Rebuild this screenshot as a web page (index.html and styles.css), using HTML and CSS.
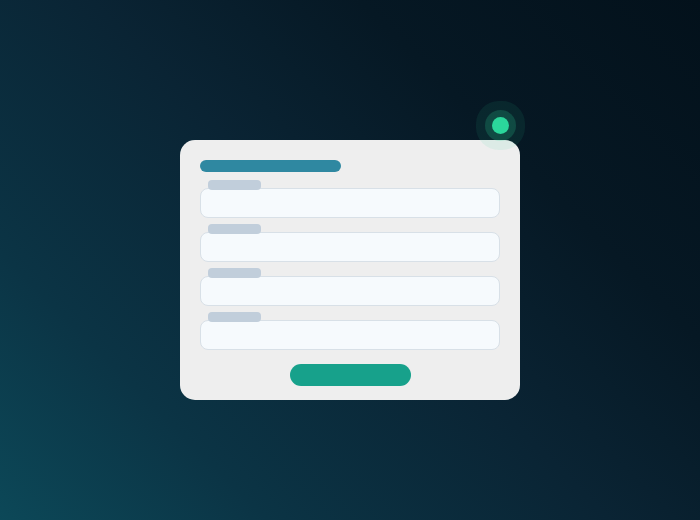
FILE: index.html
```html
<!DOCTYPE html>
<html>
<head>
<meta charset="utf-8">
<link rel="stylesheet" href="styles.css">
</head>
<body>
<div class="card">
  <span class="status-dot"></span>
  <div class="title-bar"></div>
  <div class="fields">
    <div class="field"><div class="label"></div><div class="input"></div></div>
    <div class="field"><div class="label"></div><div class="input"></div></div>
    <div class="field"><div class="label"></div><div class="input"></div></div>
    <div class="field"><div class="label"></div><div class="input"></div></div>
  </div>
  <div class="submit"></div>
</div>
</body>
</html>
```
FILE: styles.css
```css
html, body {
  margin: 0;
  height: 100%;
}
body {
  font-family: "Liberation Sans", Arial, sans-serif;
  background: linear-gradient(45deg, #0c4858 0%, #0b3445 22%, #0a2434 50%, #061824 72%, #03111b 100%);
  padding-top: 140px;
  box-sizing: border-box;
  overflow: hidden;
}
.card {
  position: relative;
  width: 340px;
  height: 260px;
  margin: 0 auto;
  box-sizing: border-box;
  padding: 20px 20px 14px 20px;
  background: #eeeeee;
  border-radius: 15px;
  display: flex;
  flex-direction: column;
}
.status-dot {
  position: absolute;
  left: 312px;
  top: -23px;
  width: 17px;
  height: 17px;
  border-radius: 50%;
  background: #2bd69b;
  box-shadow: 0 0 0 7px rgba(43, 214, 155, 0.2), 0 0 0 16px rgba(43, 214, 155, 0.09);
}
.title-bar {
  width: 141px;
  height: 12px;
  border-radius: 6px;
  background: #2f88a1;
}
.fields {
  margin-top: 8px;
  display: flex;
  flex-direction: column;
  gap: 6px;
}
.field {
  display: flex;
  flex-direction: column;
}
.label {
  position: relative;
  margin-left: 8px;
  width: 53px;
  height: 10px;
  border-radius: 4px;
  background: #c1cedb;
  margin-bottom: -2px;
}
.input {
  height: 30px;
  box-sizing: border-box;
  border: 1px solid #d8e0e7;
  border-radius: 8px;
  background: #f6fafd;
}
.submit {
  align-self: center;
  margin-top: 14px;
  width: 121px;
  height: 22px;
  border-radius: 11px;
  background: #17a18b;
}
```
